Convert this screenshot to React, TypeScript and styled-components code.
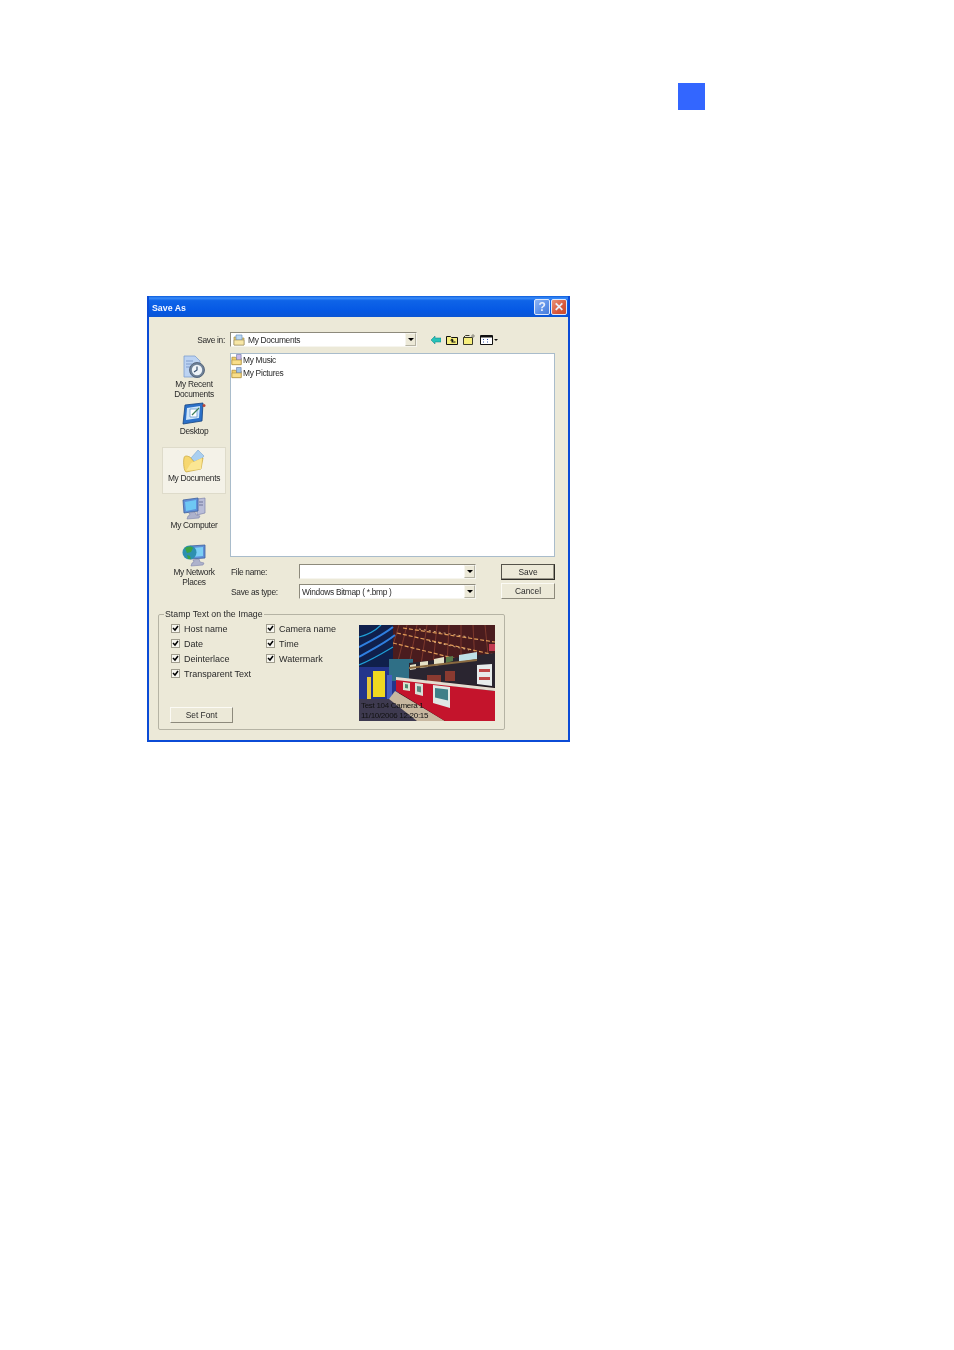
import styled, { createGlobalStyle } from "styled-components";

const GlobalStyle = createGlobalStyle`
  html, body {
    margin: 0;
    padding: 0;
    background: #fff;
  }
  body {
    font-family: "Liberation Sans", Arial, sans-serif;
  }
`;

const Page = styled.div`
  width: 954px;
  height: 1350px;
  padding-top: 83px;
  box-sizing: border-box;
  overflow: hidden;
`;

const ChapterMark = styled.div`
  width: 27px;
  height: 27px;
  margin-left: 678px;
  background: #3366ff;
`;

const Dialog = styled.div`
  width: 423px;
  height: 446px;
  margin: 186px 0 0 147px;
  box-sizing: border-box;
  display: flex;
  flex-direction: column;
  background: #ece9d8;
  border: 2px solid #0b4bd6;
  border-top: 0;
  color: #2a2a2a;
  font-size: 8.4px;
  letter-spacing: -0.3px;
  line-height: 10px;
  filter: blur(0.3px);
`;

const TitleBar = styled.div`
  height: 21px;
  flex: none;
  display: flex;
  align-items: center;
  padding: 0 1px 0 3px;
  background: linear-gradient(180deg, #0a5bdc 0%, #3a8cf8 10%, #0f64e8 22%, #0558e4 70%, #0a55d4 100%);
`;

const Title = styled.span`
  flex: 1;
  padding-top: 2px;
  color: #f4f7ff;
  font-weight: bold;
  font-size: 8.8px;
  letter-spacing: 0;
`;

const CaptionButton = styled.div<{ $close?: boolean }>`
  width: 16px;
  height: 16px;
  margin-left: 1px;
  box-sizing: border-box;
  display: flex;
  align-items: center;
  justify-content: center;
  border: 1px solid #dfe8fa;
  border-radius: 2px;
  color: #e9effb;
  font-size: 12px;
  font-weight: bold;
  background: ${(p) =>
    p.$close
      ? "linear-gradient(135deg, #e8937a, #d9573a 60%, #c84a2c)"
      : "linear-gradient(135deg, #8db4f4, #5b8fe8 60%, #477bd8)"};
`;

const Browser = styled.div`
  display: grid;
  grid-template-columns: 64px 325px;
  grid-template-rows: 15px 204px auto;
  column-gap: 4px;
  row-gap: 6px;
  padding: 15px 0 0 13px;
`;

const SaveInLabel = styled.label`
  align-self: center;
  text-align: right;
  padding-right: 1px;
`;

const SaveInRow = styled.div`
  display: flex;
  align-items: center;
`;

const Combo = styled.div<{ $width: number }>`
  width: ${(p) => p.$width}px;
  height: 15px;
  box-sizing: border-box;
  display: flex;
  align-items: center;
  gap: 3px;
  padding-left: 2px;
  background: #fff;
  border: 1px solid;
  border-color: #8d8a7c #f6f5ee #f6f5ee #8d8a7c;
  overflow: hidden;
`;

const ComboText = styled.span`
  flex: 1;
  white-space: nowrap;
`;

const ComboArrow = styled.div`
  width: 11px;
  height: 13px;
  flex: none;
  display: flex;
  align-items: center;
  justify-content: center;
  background: #ece9d8;
  border: 1px solid;
  box-sizing: border-box;
  border-color: #f6f5ee #b5b3a4 #b5b3a4 #f6f5ee;
  &::after {
    content: "";
    border: 3px solid transparent;
    border-top: 3px solid #000;
    border-bottom: 0;
  }
`;

const Toolbar = styled.div`
  display: flex;
  align-items: center;
  margin-left: 14px;
  gap: 5px;
`;

const Sidebar = styled.nav`
  grid-row: 2 / span 2;
  display: grid;
  grid-auto-rows: 47px;
`;

const Place = styled.div<{ $active?: boolean }>`
  display: flex;
  flex-direction: column;
  align-items: center;
  padding-top: 2px;
  box-sizing: border-box;
  text-align: center;
  line-height: 9.5px;
  background: ${(p) => (p.$active ? "#f4f2e8" : "transparent")};
  box-shadow: ${(p) => (p.$active ? "inset 0 0 0 1px #dedbca" : "none")};
  svg {
    flex: none;
    margin-bottom: 1px;
  }
`;

const FileList = styled.div`
  box-sizing: border-box;
  padding: 0;
  background: #fff;
  border: 1px solid #a9bccb;
  display: flex;
  flex-direction: column;
  gap: 1px;
`;

const FileRow = styled.div`
  display: flex;
  align-items: center;
  height: 12px;
  gap: 0;
`;

const FormArea = styled.div`
  display: flex;
  gap: 25px;
  padding-top: 1px;
`;

const Fields = styled.div`
  display: grid;
  grid-template-columns: 69px 177px;
  grid-auto-rows: 15px;
  row-gap: 5px;
  align-items: center;
`;

const FieldLabel = styled.label`
  padding-left: 1px;
`;

const Actions = styled.div`
  display: flex;
  flex-direction: column;
  gap: 3px;
`;

const Button = styled.button<{ $primary?: boolean; $width?: number }>`
  width: ${(p) => p.$width ?? 54}px;
  height: 16px;
  padding: 0;
  font-family: inherit;
  font-size: 8.4px;
  letter-spacing: 0;
  color: #2a2a2a;
  background: #ece9d8;
  border: 1px solid;
  border-color: ${(p) =>
    p.$primary ? "#55534a #2e2d28 #2e2d28 #55534a" : "#fbfaf4 #8d8a7c #8d8a7c #fbfaf4"};
  box-shadow: ${(p) => (p.$primary ? "inset -1px -1px 0 #9a978a" : "none")};
`;

const StampGroup = styled.fieldset`
  width: 347px;
  height: 121px;
  margin: 10px 0 0 9px;
  padding: 0 0 0 12px;
  box-sizing: border-box;
  border: 1px solid #b5b3a4;
  border-radius: 2px;
`;

const StampLegend = styled.legend`
  margin-left: -7px;
  padding: 0 1px;
  font-size: 8.8px;
  letter-spacing: 0;
  line-height: 11px;
`;

const StampBody = styled.div`
  display: flex;
  padding-top: 1px;
`;

const StampControls = styled.div`
  width: 188px;
  height: 102px;
  display: flex;
  flex-direction: column;
  justify-content: space-between;
`;

const CheckGrid = styled.div`
  display: grid;
  grid-template-columns: 95px 93px;
  grid-auto-rows: 15px;
  grid-auto-flow: column;
  grid-template-rows: repeat(4, 15px);
`;

const CheckRow = styled.label`
  display: flex;
  align-items: center;
  gap: 4px;
  white-space: nowrap;
  font-size: 9px;
  letter-spacing: 0;
`;

const CheckBox = styled.span`
  width: 9px;
  height: 9px;
  flex: none;
  box-sizing: border-box;
  display: flex;
  background: #f7f6ef;
  border: 1px solid #a09d8e;
  svg {
    display: block;
  }
`;

const FontButton = styled(Button)`
  margin-left: -1px;
`;

const Preview = styled.div`
  position: relative;
  width: 136px;
  height: 96px;
  margin-top: 4px;
  flex: none;
  svg {
    display: block;
  }
`;

const PreviewCaption = styled.div`
  position: absolute;
  left: 2px;
  bottom: 0;
  color: #111;
  line-height: 10px;
  font-size: 8px;
  white-space: nowrap;
`;

const RecentIcon = () => (
  <svg width="24" height="24" viewBox="0 0 24 24">
    <path d="M2 1h11l5 5v16H2z" fill="#bcd3f2" stroke="#7f9fce" strokeWidth="0.8" />
    <path d="M4 6h7M4 9h6M4 12h5" stroke="#7e9ccc" strokeWidth="1" />
    <circle cx="15" cy="15" r="7.5" fill="#6f8298" stroke="#46566c" strokeWidth="0.8" />
    <circle cx="15" cy="15" r="5.2" fill="#eef3f8" />
    <path d="M15 11.5V15l-3 2" fill="none" stroke="#38506e" strokeWidth="1.2" />
  </svg>
);

const DesktopIcon = () => (
  <svg width="24" height="24" viewBox="0 0 24 24">
    <path d="M3 3l18-2-1 18-19 3z" fill="#2b70c8" stroke="#15427f" strokeWidth="0.8" />
    <path d="M5 6l13-2-1 12-13 2z" fill="#cfe6fa" />
    <path d="M8 7h7v8H8z" fill="#fff" stroke="#6b9bd0" strokeWidth="0.8" />
    <path d="M10 13l7-7" stroke="#3f7f5a" strokeWidth="1.2" />
    <circle cx="22" cy="3.5" r="1.5" fill="#b8483a" />
  </svg>
);

const DocumentsIcon = () => (
  <svg width="24" height="24" viewBox="0 0 24 24">
    <path d="M9 9l7-8 6 6-7 8z" fill="#a9cff0" stroke="#7ca6cf" strokeWidth="0.6" />
    <path d="M2 9c0-2 2-2 3-2l3 1 4 5 9-4-2 11-15 3C2 22 1 14 2 9z" fill="#f6d76f" stroke="#c9a83e" strokeWidth="0.7" />
    <path d="M4 22l5-8 11-5-1 11z" fill="#fbe693" />
  </svg>
);

const ComputerIcon = () => (
  <svg width="24" height="24" viewBox="0 0 24 24">
    <path d="M15 3l8-1v15l-8 2z" fill="#b9bdd8" stroke="#7f84ac" strokeWidth="0.7" />
    <path d="M17 6h4M17 9h4" stroke="#6f7499" strokeWidth="1" />
    <path d="M1 4l15-2v13L2 17z" fill="#5f8fd8" stroke="#3e5f9c" strokeWidth="0.8" />
    <path d="M3 6l11-2v9L4 15z" fill="#6ec8f4" />
    <path d="M7 17l6-1 1 3 4 1-1 2-12 1 1-3 2-1z" fill="#aeb2cc" stroke="#7f84ac" strokeWidth="0.6" />
  </svg>
);

const NetworkIcon = () => (
  <svg width="24" height="24" viewBox="0 0 24 24">
    <path d="M8 3l15-1v13l-15 1z" fill="#5f8fd8" stroke="#3e5f9c" strokeWidth="0.8" />
    <path d="M10 5l11-1v9l-11 1z" fill="#7ccff5" />
    <circle cx="7.5" cy="9.5" r="7" fill="#2d8fb0" />
    <path d="M3 5c3-2 6-2 8 0l-2 4-4 1zM5 12l3 1 1 3-3 0z" fill="#3ba244" />
    <path d="M11 17l6-1 1 3 4 1-1 2-12 1 1-3 2-1z" fill="#aeb2cc" stroke="#7f84ac" strokeWidth="0.6" />
  </svg>
);

const SmallFolder = ({ badge }: { badge?: string }) => (
  <svg width="12" height="12" viewBox="0 0 13 12">
    <path d="M1 3h4l1 1h5v7H1z" fill="#f2cf66" stroke="#a98a3a" strokeWidth="0.8" />
    {badge && <path d="M6 0h5v6H6z" fill={badge} stroke="#5b6a9a" strokeWidth="0.6" />}
    <path d="M1 6h10v5H1z" fill="#f8de8a" stroke="#a98a3a" strokeWidth="0.6" />
  </svg>
);

const ComboFolder = () => (
  <svg width="12" height="12" viewBox="0 0 12 12">
    <path d="M1 3h4l1 1h5v7H1z" fill="#f2cf66" stroke="#9c8c5a" strokeWidth="0.7" />
    <path d="M3 1h6v5H3z" fill="#b9d7f2" stroke="#6e93bd" strokeWidth="0.7" />
    <path d="M1 6h10v5H1z" fill="#f8e7a6" stroke="#9c8c5a" strokeWidth="0.6" />
  </svg>
);

const BackIcon = () => (
  <svg width="10" height="8" viewBox="0 0 10 8">
    <path d="M0 4l4-4v2h6v4H4v2z" fill="#27c2b8" stroke="#0e7f86" strokeWidth="0.5" />
  </svg>
);

const UpIcon = () => (
  <svg width="12" height="10" viewBox="0 0 12 10">
    <path d="M.5 1.5h4l1 1h6v7H.5z" fill="#f6ee7c" stroke="#111" />
    <path d="M6 3.5L4 5.5h1.5v2h4v-1H7v-1h1z" fill="#111" />
  </svg>
);

const NewFolderIcon = () => (
  <svg width="12" height="11" viewBox="0 0 12 11">
    <path d="M.5 3.5h9v7h-9z" fill="#f6ee7c" stroke="#3a3a2a" />
    <path d="M.5 3.5l2-2h4" fill="none" stroke="#3a3a2a" />
    <path d="M10 0v4M8 2h4" stroke="#77756a" strokeWidth="0.8" />
  </svg>
);

const ViewsIcon = () => (
  <svg width="19" height="10" viewBox="0 0 19 10">
    <path d="M.5.5h12v9H.5z" fill="#fff" stroke="#111" />
    <path d="M.5 1h12v1.5H.5z" fill="#111" />
    <path d="M3 4.5h2M7 4.5h2M3 7h2M7 7h2" stroke="#2a4fa8" strokeDasharray="1 1" />
    <path d="M14 4h4l-2 2z" fill="#111" />
  </svg>
);

const CheckMark = () => (
  <svg width="7" height="7" viewBox="0 0 7 7">
    <path d="M1 3l2 2 3-4" fill="none" stroke="#000" strokeWidth="1.5" />
  </svg>
);

// ceiling light rows in the preview photo
const ceilingLines = [8, 16, 24, 32, 40, 50, 60, 70, 82, 94, 106, 118, 130];

const PreviewPhoto = () => (
  <svg width="136" height="96" viewBox="0 0 136 96">
    <rect width="136" height="96" fill="#1c1016" />
    <path d="M30 0h106v32L60 38 30 44z" fill="#4a1c1e" />
    {ceilingLines.map((x, i) => (
      <path key={x} d={`M${x + 8} 0L${x - 10 + i * 2} 40`} stroke="#8a4030" strokeWidth="0.8" />
    ))}
    <path d="M38 8l98 22M44 3l92 14M34 18l80 20" stroke="#e09a58" strokeWidth="1.2" strokeDasharray="4 2" />
    <path d="M60 4l50 8M70 16l40 9" stroke="#f0c890" strokeWidth="0.8" strokeDasharray="2 3" />
    <path d="M0 0h34v44H0z" fill="#10204c" />
    <path d="M0 22C12 16 24 10 34 2M0 32C14 24 26 18 36 10" fill="none" stroke="#2f7fe0" strokeWidth="2" />
    <path d="M0 12C8 10 16 6 22 0M0 40c10-4 24-12 34-18" fill="none" stroke="#1fa0d8" strokeWidth="1.2" />
    <path d="M0 42h40v34H0z" fill="#24358c" />
    <path d="M30 34h24v22H30z" fill="#2f6f86" />
    <path d="M50 38l86-10v34L50 54z" fill="#2a2530" />
    <path d="M51 40l6-1v5l-6 1zM61 37l8-1v6l-8 1zM75 34l10-2v7l-10 2z" fill="#e6e2c8" />
    <path d="M87 32l7-1v5l-7 2z" fill="#5a7a4a" />
    <path d="M100 30l18-3v7l-18 3z" fill="#bfe0e8" />
    <path d="M130 19h6v7h-6z" fill="#c23a50" />
    <path d="M50 42l68-8v2l-68 8z" fill="#8a6a40" />
    <path d="M68 50h14v8H68zM86 46h10v10H86z" fill="#8a3a30" />
    <path d="M118 40l15-1v22l-15-2z" fill="#e8ecec" />
    <path d="M120 44h11v3h-11zM120 52h11v3h-11z" fill="#c04848" />
    <path d="M14 46h12v26H14z" fill="#f0d820" />
    <path d="M8 52h4v22H8z" fill="#e8c838" />
    <path d="M28 50h5v24h-5z" fill="#4460c0" />
    <path d="M0 74h36l30 22H0z" fill="#3e3a50" />
    <path d="M36 66l50 30H58L30 74z" fill="#c8b8a0" />
    <path d="M37 54l99 12v30H86L37 66z" fill="#c4142c" />
    <path d="M37 52l99 11v3L37 55z" fill="#e4dcd0" />
    <path d="M44 57l7 1v8l-7-1z" fill="#d8e4d0" />
    <path d="M46 59l3 .5v4l-3-.5z" fill="#4f8a70" />
    <path d="M56 58l8 1v12l-8-2z" fill="#d8e0d8" />
    <path d="M58 61l4 .5v6l-4-1z" fill="#5a8a80" />
    <path d="M74 60l17 2v21l-17-5z" fill="#dfe8e4" />
    <path d="M76 63l13 1.5v11l-13-3z" fill="#3f7f88" />
  </svg>
);

const checks = [
  "Host name",
  "Date",
  "Deinterlace",
  "Transparent Text",
  "Camera name",
  "Time",
  "Watermark",
];

export default function App() {
  return (
    <Page>
      <GlobalStyle />
      <ChapterMark />
      <Dialog>
        <TitleBar>
          <Title>Save As</Title>
          <CaptionButton>?</CaptionButton>
          <CaptionButton $close>✕</CaptionButton>
        </TitleBar>
        <Browser>
          <SaveInLabel>Save in:</SaveInLabel>
          <SaveInRow>
            <Combo $width={187}>
              <ComboFolder />
              <ComboText>My Documents</ComboText>
              <ComboArrow />
            </Combo>
            <Toolbar>
              <BackIcon />
              <UpIcon />
              <NewFolderIcon />
              <ViewsIcon />
            </Toolbar>
          </SaveInRow>
          <Sidebar>
            <Place>
              <RecentIcon />
              My Recent
              <br />
              Documents
            </Place>
            <Place>
              <DesktopIcon />
              Desktop
            </Place>
            <Place $active>
              <DocumentsIcon />
              My Documents
            </Place>
            <Place>
              <ComputerIcon />
              My Computer
            </Place>
            <Place>
              <NetworkIcon />
              My Network
              <br />
              Places
            </Place>
          </Sidebar>
          <FileList>
            <FileRow>
              <SmallFolder badge="#c9b8e8" />
              My Music
            </FileRow>
            <FileRow>
              <SmallFolder badge="#9fc4e8" />
              My Pictures
            </FileRow>
          </FileList>
          <FormArea>
            <Fields>
              <FieldLabel>File name:</FieldLabel>
              <Combo $width={177}>
                <ComboText />
                <ComboArrow />
              </Combo>
              <FieldLabel>Save as type:</FieldLabel>
              <Combo $width={177}>
                <ComboText>Windows Bitmap ( *.bmp )</ComboText>
                <ComboArrow />
              </Combo>
            </Fields>
            <Actions>
              <Button $primary>Save</Button>
              <Button>Cancel</Button>
            </Actions>
          </FormArea>
        </Browser>
        <StampGroup>
          <StampLegend>Stamp Text on the Image</StampLegend>
          <StampBody>
            <StampControls>
              <CheckGrid>
                {checks.map((label) => (
                  <CheckRow key={label}>
                    <CheckBox>
                      <CheckMark />
                    </CheckBox>
                    {label}
                  </CheckRow>
                ))}
              </CheckGrid>
              <FontButton $width={63}>Set Font</FontButton>
            </StampControls>
            <Preview>
              <PreviewPhoto />
              <PreviewCaption>
                Test 104 Camera 1
                <br />
                11/10/2006 12:20:15
              </PreviewCaption>
            </Preview>
          </StampBody>
        </StampGroup>
      </Dialog>
    </Page>
  );
}
